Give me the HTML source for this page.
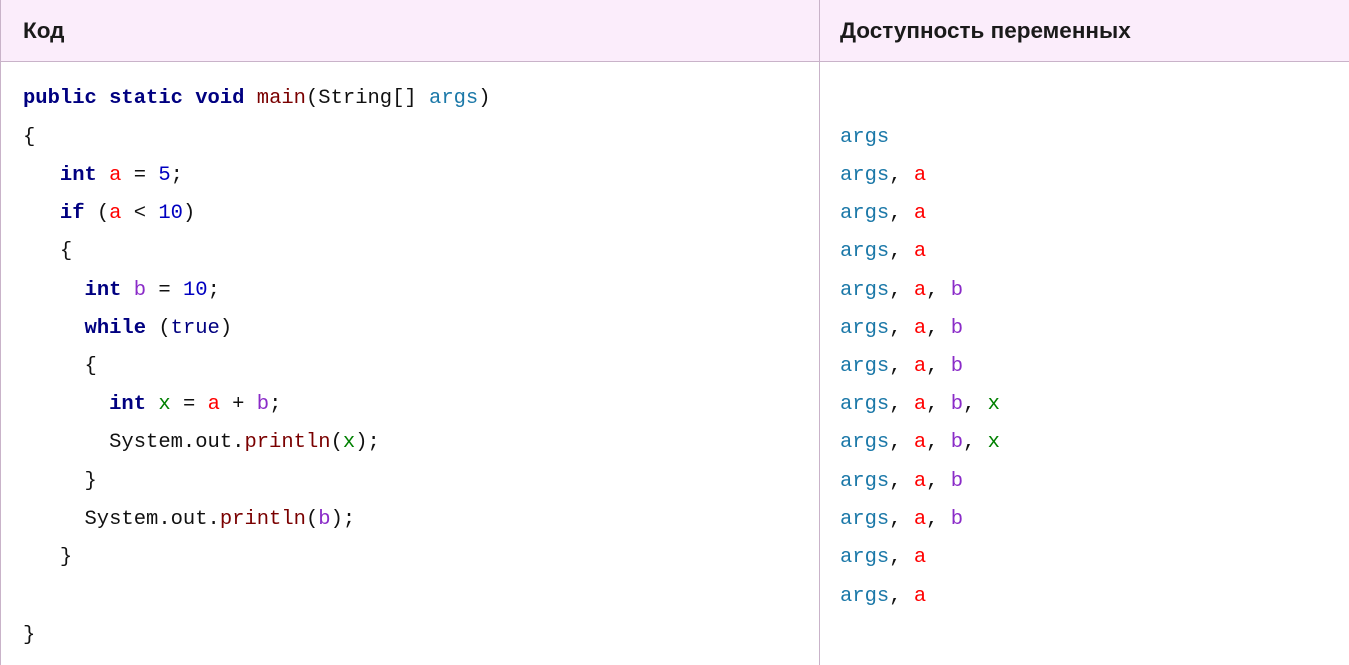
<!DOCTYPE html>
<html><head><meta charset="utf-8"><style>
html,body{margin:0;padding:0;background:#fff;width:1349px;height:665px;overflow:hidden}
.hdr{position:absolute;left:0;top:0;width:1349px;height:61px;background:#fbedfb;border-bottom:1px solid #c9b3c9}
.vl{position:absolute;top:0;width:1px;height:665px;background:#c9b3c9}
.h{position:absolute;top:18px;font:bold 22.5px/26px "Liberation Sans",sans-serif;color:#1a1a1a}
.ln{position:absolute;font:20.5px/24px "Liberation Mono",monospace;white-space:pre;color:#111}
.k{color:#000080;font-weight:bold}.m{color:#7a0000}.g{color:#1b78a8}.a{color:#f00}.n{color:#0000c0}.b{color:#8a2bc8}.x{color:#008000}
</style></head><body>
<div class="hdr"></div>
<div class="vl" style="left:0"></div>
<div class="vl" style="left:819px"></div>
<div class="h" style="left:23px">Код</div>
<div class="h" style="left:840px">Доступность переменных</div>

<div class="ln" style="left:23px;top:87px"><span class="k">public</span> <span class="k">static</span> <span class="k">void</span> <span class="m">main</span>(String[] <span class="g">args</span>)</div>
<div class="ln" style="left:23px;top:126px">{</div>
<div class="ln" style="left:23px;top:164px">   <span class="k">int</span> <span class="a">a</span> = <span class="n">5</span>;</div>
<div class="ln" style="left:23px;top:202px">   <span class="k">if</span> (<span class="a">a</span> &lt; <span class="n">10</span>)</div>
<div class="ln" style="left:23px;top:240px">   {</div>
<div class="ln" style="left:23px;top:279px">     <span class="k">int</span> <span class="b">b</span> = <span class="n">10</span>;</div>
<div class="ln" style="left:23px;top:317px">     <span class="k">while</span> (<span class="k" style="font-weight:normal">true</span>)</div>
<div class="ln" style="left:23px;top:355px">     {</div>
<div class="ln" style="left:23px;top:393px">       <span class="k">int</span> <span class="x">x</span> = <span class="a">a</span> + <span class="b">b</span>;</div>
<div class="ln" style="left:23px;top:431px">       System.out.<span class="m">println</span>(<span class="x">x</span>);</div>
<div class="ln" style="left:23px;top:470px">     }</div>
<div class="ln" style="left:23px;top:508px">     System.out.<span class="m">println</span>(<span class="b">b</span>);</div>
<div class="ln" style="left:23px;top:546px">   }</div>
<div class="ln" style="left:23px;top:624px">}</div>

<div class="ln" style="left:840px;top:126px"><span class="g">args</span></div>
<div class="ln" style="left:840px;top:164px"><span class="g">args</span>, <span class="a">a</span></div>
<div class="ln" style="left:840px;top:202px"><span class="g">args</span>, <span class="a">a</span></div>
<div class="ln" style="left:840px;top:240px"><span class="g">args</span>, <span class="a">a</span></div>
<div class="ln" style="left:840px;top:279px"><span class="g">args</span>, <span class="a">a</span>, <span class="b">b</span></div>
<div class="ln" style="left:840px;top:317px"><span class="g">args</span>, <span class="a">a</span>, <span class="b">b</span></div>
<div class="ln" style="left:840px;top:355px"><span class="g">args</span>, <span class="a">a</span>, <span class="b">b</span></div>
<div class="ln" style="left:840px;top:393px"><span class="g">args</span>, <span class="a">a</span>, <span class="b">b</span>, <span class="x">x</span></div>
<div class="ln" style="left:840px;top:431px"><span class="g">args</span>, <span class="a">a</span>, <span class="b">b</span>, <span class="x">x</span></div>
<div class="ln" style="left:840px;top:470px"><span class="g">args</span>, <span class="a">a</span>, <span class="b">b</span></div>
<div class="ln" style="left:840px;top:508px"><span class="g">args</span>, <span class="a">a</span>, <span class="b">b</span></div>
<div class="ln" style="left:840px;top:546px"><span class="g">args</span>, <span class="a">a</span></div>
<div class="ln" style="left:840px;top:585px"><span class="g">args</span>, <span class="a">a</span></div>
</body></html>
